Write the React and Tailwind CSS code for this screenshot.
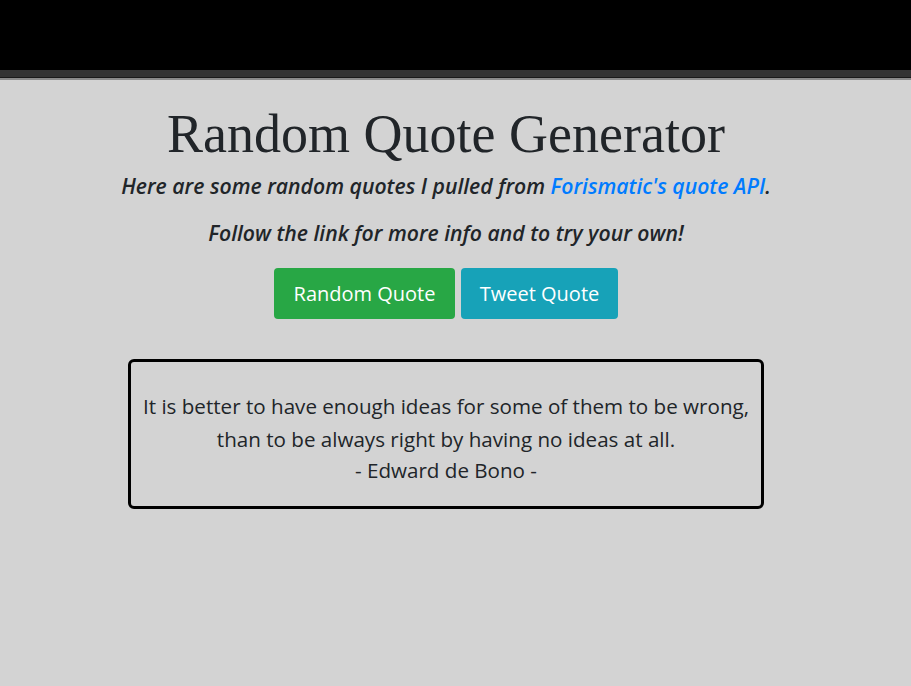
export default function App() {
  return (
    <div className="min-h-[686px] bg-[#d3d3d3] text-[#212529] font-['Open_Sans',sans-serif]">
      {/* TOP BAR */}
      <div className="h-[70px] bg-black" />
      <div className="h-[7px] bg-[#333333]" />
      <div className="h-px bg-[#1a1a1a]" />
      <div className="h-[2px] bg-[#8a8a8a]" />

      <div className="w-[892px] flex flex-col items-center">
        <h1 className="mt-[24px] text-[54px] leading-[60px] font-['Liberation_Serif',serif]">
          Random Quote Generator
        </h1>

        <p className="mt-[7px] text-[21.2px] leading-[30px] italic font-semibold">
          Here are some random quotes I pulled from{" "}
          <a href="#" className="text-[#007bff]">Forismatic's quote API</a>.
        </p>

        <p className="mt-[17px] text-[21.2px] leading-[30px] italic font-semibold">
          Follow the link for more info and to try your own!
        </p>

        <div className="mt-[20px] flex gap-[6px]">
          <button className="w-[181px] h-[51px] rounded-[4px] bg-[#28a745] text-white text-[20px]">
            Random Quote
          </button>
          <button className="w-[157px] h-[51px] rounded-[4px] bg-[#17a2b8] text-white text-[20px]">
            Tweet Quote
          </button>
        </div>

        <div className="mt-[40px] w-[636px] h-[150px] pt-[6px] border-[3px] border-black rounded-[6px] flex flex-col items-center justify-center text-[20.6px] leading-[33px] text-center">
          <p>It is better to have enough ideas for some of them to be wrong,</p>
          <p>than to be always right by having no ideas at all.</p>
          <p className="leading-[28px]">- Edward de Bono -</p>
        </div>
      </div>
    </div>
  );
}
